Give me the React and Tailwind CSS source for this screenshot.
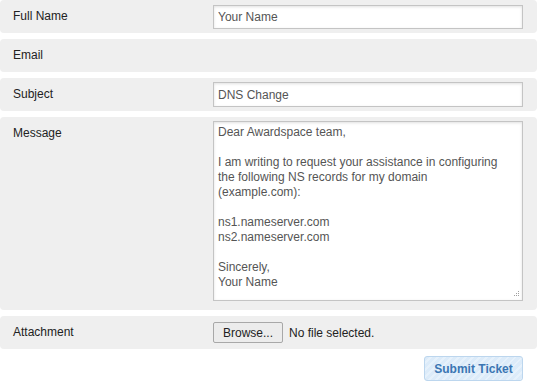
const message = `Dear Awardspace team,

I am writing to request your assistance in configuring
the following NS records for my domain
(example.com):

ns1.nameserver.com
ns2.nameserver.com

Sincerely,
Your Name`;

const Row = ({ label, children, className = "" }) => (
    <div className={`flex bg-[#efefef] rounded-[4px] min-h-[33px] ${className}`}>
        <div className="w-[213px] shrink-0 pl-[13px] pt-[9px] text-[12px] leading-[15px] text-[#222]">{label}</div>
        <div className="flex-1">{children}</div>
    </div>
);

export default function App() {
    return (
        <div className="w-[537px] h-[391px] bg-white overflow-hidden" style={{ fontFamily: '"Liberation Sans", Arial, sans-serif' }}>
            <div className="flex flex-col gap-[6px]">
                <Row label="Full Name">
                    <input
                        type="text"
                        defaultValue="Your Name"
                        className="mt-[5px] w-[310px] h-[24px] border border-[#c4c4c4] bg-white px-[4px] text-[12px] text-[#555] shadow-[inset_0_1px_3px_rgba(0,0,0,0.12)] outline-none"
                    />
                </Row>
                <Row label="Email" />
                <Row label="Subject">
                    <input
                        type="text"
                        defaultValue="DNS Change"
                        className="mt-[4px] w-[310px] h-[25px] border border-[#c4c4c4] bg-white px-[4px] text-[12px] text-[#555] shadow-[inset_0_1px_3px_rgba(0,0,0,0.12)] outline-none"
                    />
                </Row>
                <Row label="Message" className="h-[193px]">
                    <div className="relative mt-[4px] w-[310px] h-[180px]">
                        <textarea
                            defaultValue={message}
                            wrap="off"
                            className="block w-full h-full border border-[#c4c4c4] bg-white px-[4px] py-[3px] text-[12px] leading-[15px] text-[#555] shadow-[inset_0_1px_3px_rgba(0,0,0,0.12)] outline-none resize-none overflow-hidden"
                        />
                        {/* resize grip */}
                        <svg className="absolute right-[3px] bottom-[3px]" width="7" height="7" viewBox="0 0 7 7">
                            <g fill="#a0a0a0">
                                <rect x="5" y="0" width="1" height="1" />
                                <rect x="3" y="2" width="1" height="1" />
                                <rect x="5" y="2" width="1" height="1" />
                                <rect x="1" y="4" width="1" height="1" />
                                <rect x="3" y="4" width="1" height="1" />
                                <rect x="5" y="4" width="1" height="1" />
                            </g>
                        </svg>
                    </div>
                </Row>
                <Row label="Attachment" className="h-[32px]">
                    <div className="flex items-center gap-[6px] mt-[6px]">
                        <button className="h-[21px] w-[70px] border border-[#a8a8a8] bg-[#ececec] rounded-[2px] text-[12px] text-[#222] leading-none">
                            Browse...
                        </button>
                        <span className="text-[12px] text-[#222]">No file selected.</span>
                    </div>
                </Row>
            </div>
            <div className="flex justify-end pr-[14px] pt-[7px]">
                <button
                    className="w-[99px] h-[25px] rounded-[3px] border border-[#bcd6ee] text-[12px] font-bold text-[#3b76b3] bg-[repeating-linear-gradient(135deg,#dcebf9_0px,#dcebf9_3px,#e6f1fb_3px,#e6f1fb_5px)]"
                >
                    Submit Ticket
                </button>
            </div>
        </div>
    );
}
